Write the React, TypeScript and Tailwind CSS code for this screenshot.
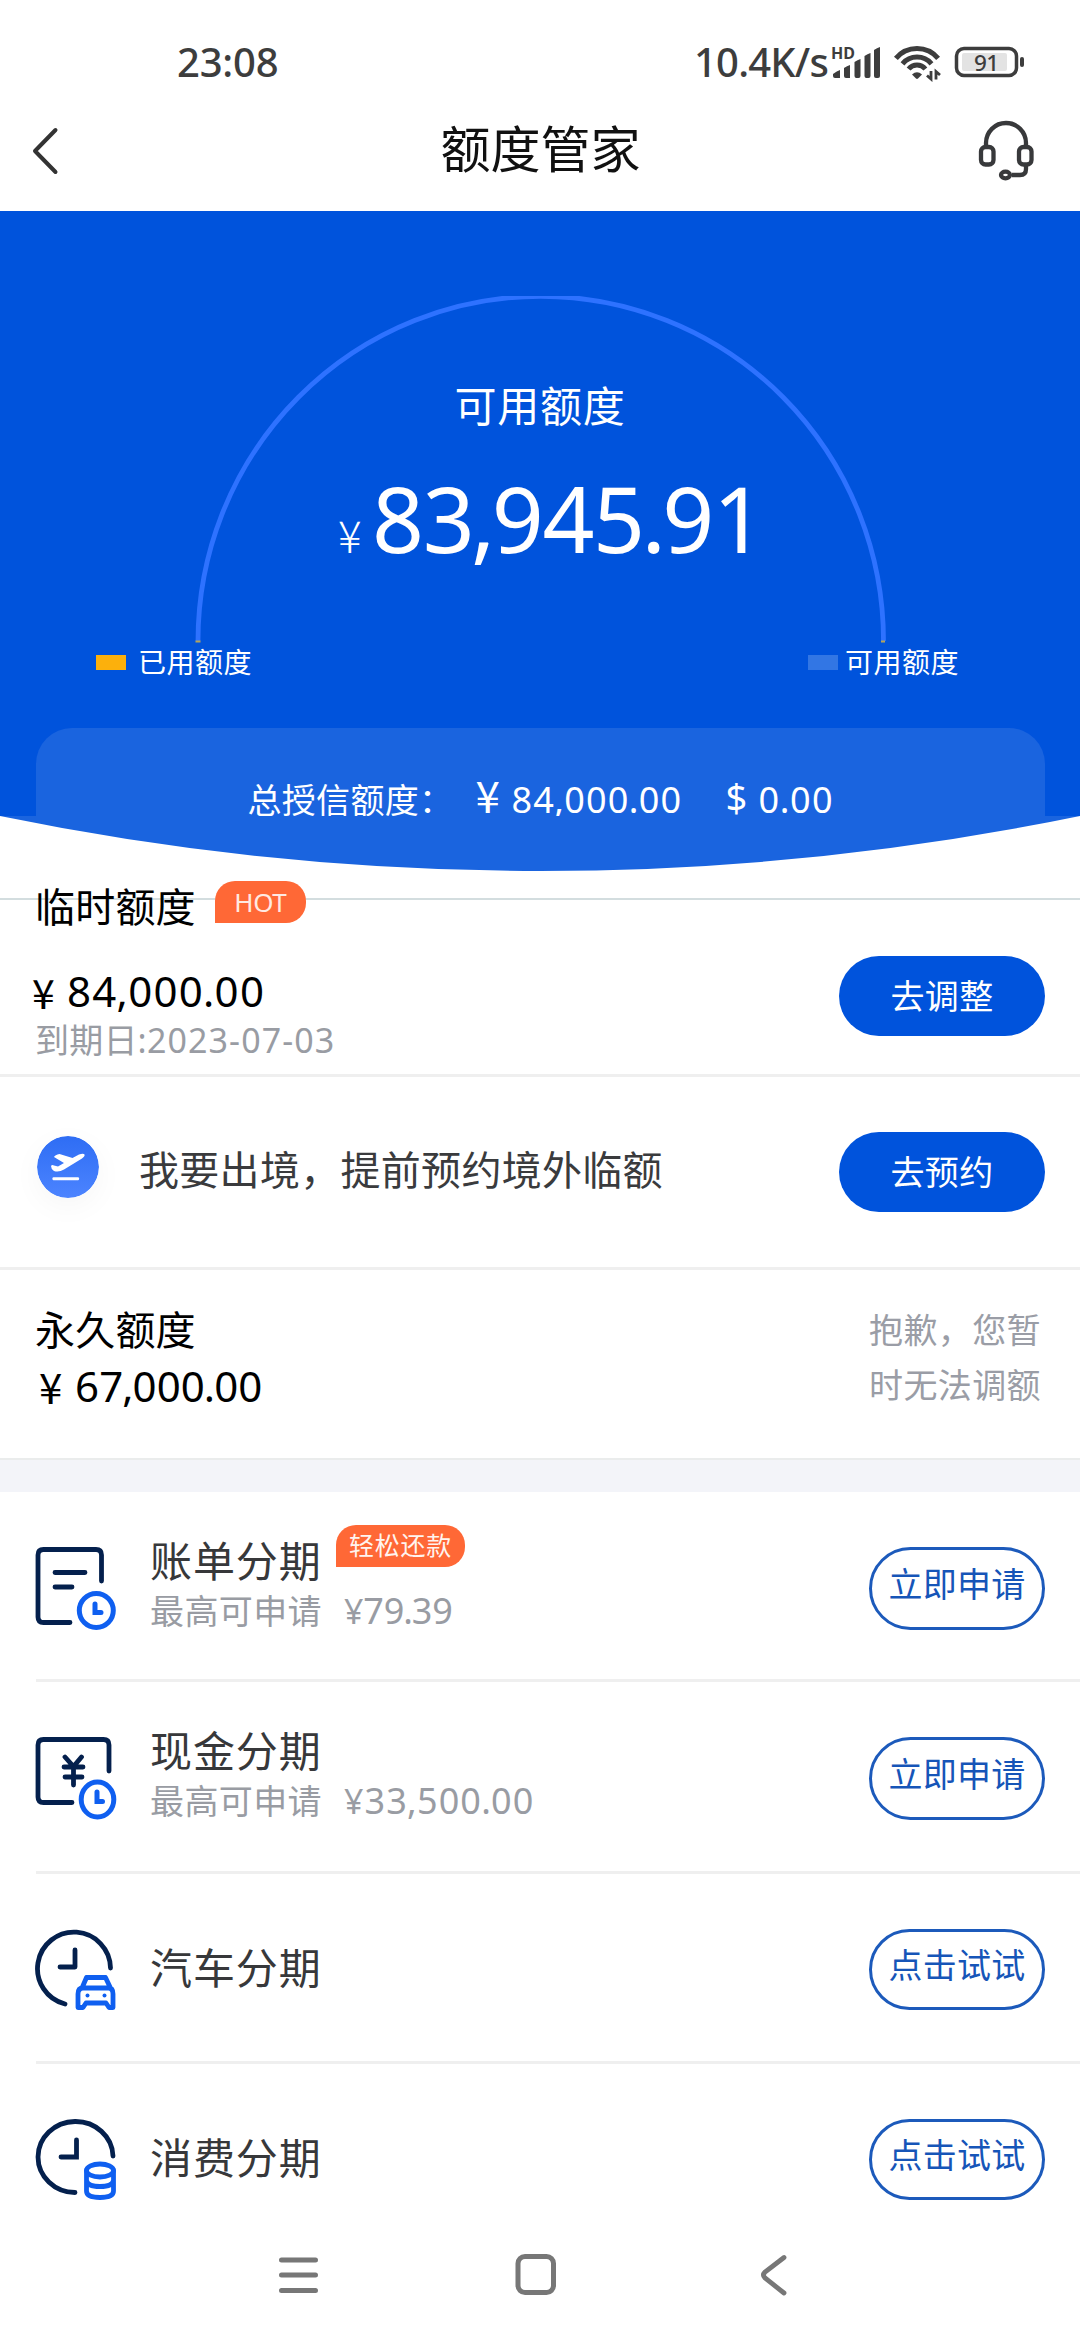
import React from "react";

/** Amount text whose separators sit closer to the neighbouring digits. */
function Num({ value }: { value: string }) {
  return (
    <>
      {value.split("").map((c, i) =>
        c === "," || c === "." ? (
          <span key={i} className="-mx-[0.025em]">{c}</span>
        ) : (
          <span key={i}>{c}</span>
        )
      )}
    </>
  );
}

function StatusBar() {
  return (
    <div className="flex h-[90px] items-center pl-[177px] text-[#3d3d3d]">
      <span className="mt-[34px] w-[102px] text-[40px] leading-[40px] font-medium whitespace-nowrap tracking-[-0.2px]">23:08</span>
      <span className="mt-[34px] ml-[415px] w-[136px] text-[40px] leading-[40px] font-medium whitespace-nowrap tracking-[-0.8px]">10.4K/s</span>
      <svg className="mt-[34px] h-[40px] w-[200px] shrink-0" viewBox="830 42 200 40" fill="none">
        <text x="831" y="58.500" fontSize="16" fontWeight="700" fill="#3d3d3d" fontFamily="Noto Sans" textLength="24" lengthAdjust="spacingAndGlyphs">HD</text>
        <g fill="#3d3d3d">
          <path d="M833 76v-2q4-3 7-4v8h-5q-2 0-2-2zM844 76v-8q3-2 6-3v13h-4q-2 0-2-2zM854.500 76V62q3-2 6-3v17q0 2-2 2h-2q-2 0-2-2zM864.500 76V56q3-2 6-3v23q0 2-2 2h-2q-2 0-2-2zM874 76V50q3-2 6-3v29q0 2-2 2h-2q-2 0-2-2z" />
          <path d="M912 74.500q5-4.500 10 0l-4 4q-1 .8-2 0z" />
        </g>
        <g stroke="#3d3d3d" strokeWidth="5">
          <path d="M895.900 58.300A27.500 27.500 0 0 1 938.100 58.300M902.500 63.800A19 19 0 0 1 931.500 63.800M908.600 69A11 11 0 0 1 925.400 69" />
        </g>
        <path d="M931 71v8l-4-3.500M936 79.500v-8l4 3.500" stroke="#3d3d3d" strokeWidth="2.800" />
        <rect x="956.5" y="48.500" width="60" height="27" rx="7.500" stroke="#3d3d3d" strokeWidth="3.500" />
        <rect x="962" y="53" width="45" height="18" rx="2" fill="#e3e3e3" />
        <rect x="1020" y="57" width="4" height="10" rx="2" fill="#3d3d3d" />
        <text x="974" y="70.800" fontSize="22.500" fontWeight="500" fill="#3d3d3d" fontFamily="Noto Sans" textLength="25">91</text>
      </svg>
    </div>
  );
}

function Header() {
  return (
    <header className="flex h-[121px] items-center justify-between pr-[45px] pl-[32px]">
      <svg className="h-[48px] w-[70px]" viewBox="0 0 70 48" fill="none" stroke="#333" strokeWidth="4" strokeLinecap="round" strokeLinejoin="round">
        <path d="M23.500 3L3 24l20.500 21" />
      </svg>
      <h1 className="-mt-[4px] ml-[2px] text-[50px] leading-[50px] font-normal text-[#111]">额度管家</h1>
      <svg className="h-[62px] w-[58px]" viewBox="977 120 58 62" fill="none" stroke="#38393b" strokeWidth="4.300">
        <path d="M986 146v-3a20 20 0 0 1 40 0v3M1026 165v4q0 6-6 6h-8" />
        <rect x="981" y="147" width="12.500" height="17.500" rx="4.500" />
        <rect x="1019" y="147" width="12.500" height="17.500" rx="4.500" />
        <ellipse cx="1005.500" cy="175" rx="4.500" ry="3.300" />
      </svg>
    </header>
  );
}

function Hero() {
  return (
    <section className="text-white">
      <div className="flex h-[605px] flex-col bg-[#0053dc]">
        <div className="relative mx-auto mt-[85px] flex h-[347px] w-[692px] flex-col items-center">
          <svg className="absolute inset-0 h-[347px] w-[692px]" viewBox="0 0 692 347" fill="none">
            <path d="M4 345A342.500 344.500 0 0 1 689.500 345" stroke="#2e72ff" strokeWidth="4.800" />
            <path d="M1.500 345.500h5M687 345.500h4" stroke="#b3a55a" strokeWidth="2" />
          </svg>
          <div className="mt-[89px] text-[42px] leading-[42px] tracking-[0.8px]">可用额度</div>
          <div className="mt-[46px] flex w-full items-baseline pl-[144px] leading-[90px]">
            <span className="w-[34px] font-['Noto_Sans_CJK_SC'] text-[44px] font-light">¥</span>
            <span className="text-[91px] tracking-[-1.4px]"><Num value="83,945.91" /></span>
          </div>
        </div>
        <div className="mt-[4px] flex h-[30px] items-center justify-between pr-[121px] pl-[96px] text-[28px] leading-[30px] tracking-[0.5px]">
          <span className="flex items-center gap-[12px]">
            <i className="h-[15px] w-[30px] bg-[#fcb00c]" />已用额度
          </span>
          <span className="flex items-center gap-[7px]">
            <i className="h-[15px] w-[30px] bg-[#3276e4]" />可用额度
          </span>
        </div>
        <div className="mx-[35.500px] mt-auto flex h-[88px] items-start rounded-t-[36px] bg-[#1a64df] pt-[54px] pl-[212px] leading-[36px] whitespace-nowrap">
          <span className="w-[228px] text-[34px] tracking-[0.3px]">总授信额度：</span>
          <span className="mt-[-6px] w-[36px] font-['Noto_Sans_CJK_SC'] text-[44px] leading-[36px]">¥</span>
          <span className="w-[214px] text-[36px] tracking-[1.2px]"><Num value="84,000.00" /></span>
          <span className="mt-[-3px] w-[33px] text-[38px]">$</span>
          <span className="text-[36px] tracking-[1.5px]"><Num value="0.00" /></span>
        </div>
      </div>
      <svg className="block h-[56px] w-full" viewBox="0 0 1080 56">
        <path d="M0 0A2678 2678 0 0 0 1080 0z" fill="#1a64df" />
      </svg>
    </section>
  );
}

function SolidButton({ children }: { children: React.ReactNode }) {
  return (
    <button className="h-[80px] w-[206px] shrink-0 rounded-full bg-[#0053dc] text-[34px] leading-[79px] tracking-[0.3px] text-white">
      {children}
    </button>
  );
}

function Temporary() {
  return (
    <section className="relative flex h-[205px] items-start justify-between border-b-[3px] border-[#efefef] pr-[35px] pl-[36px]">
      <div className="absolute top-[26px] left-0 h-[2px] w-full bg-[#d3dddf]" />
      <div className="relative">
        <div className="flex pt-[10px]">
          <span className="-ml-px mt-[5px] text-[40px] leading-[40px] tracking-[0.2px] text-black">临时额度</span>
          <span className="-mt-px ml-[19px] h-[42px] w-[91px] rounded-[20px] rounded-bl-none bg-[#ff6836] text-center text-[26px] leading-[42px] tracking-[-0.4px] text-[#ffe9e2]">HOT</span>
        </div>
        <div className="mt-[41px] ml-[-4px] flex text-[42px] leading-[46px] text-black">
          <span className="w-[35px] font-['Noto_Sans_CJK_SC'] text-[41px]">¥</span>
          <span className="tracking-[1.3px]"><Num value="84,000.00" /></span>
        </div>
        <div className="mt-[6px] -ml-px text-[34px] leading-[40px] tracking-[0.2px] text-[#999ca3]">到期日:<span className="tracking-[1.1px]">2023-07-03</span></div>
      </div>
      <div className="mt-[84px]"><SolidButton>去调整</SolidButton></div>
    </section>
  );
}

function Abroad() {
  return (
    <section className="flex h-[193px] items-center border-b-[3px] border-[#efefef] pr-[35px] pl-[37px]">
      <svg className="mt-[-11px] h-[62px] w-[62px] rounded-full shadow-[0_8px_30px_rgba(0,0,0,0.04)]" viewBox="0 0 62 62">
        <defs>
          <linearGradient id="planeBg" x1="0" y1="0" x2="0" y2="1">
            <stop offset="0" stopColor="#2e6df4" />
            <stop offset="1" stopColor="#4c84ff" />
          </linearGradient>
        </defs>
        <circle cx="31" cy="31" r="31" fill="url(#planeBg)" />
        <path d="M14 30q1-1.500 3-.5l4 1 6-3.500L17 21q1-2 5.500-3L35.500 22 42 18.500q4.500-1.500 5.500 0 .8 1.500-2.500 4L27 33.500Q22 36.500 17 35q-3-2-3-5z" fill="#fff" />
        <rect x="15.500" y="41.200" width="26.500" height="3" rx="1" fill="#fff" />
      </svg>
      <span className="-mt-[5px] ml-[40px] grow text-[40px] leading-[44px] tracking-[0.3px] text-[#3a3b3d]">我要出境，提前预约境外临额</span>
      <SolidButton>去预约</SolidButton>
    </section>
  );
}

function Permanent() {
  return (
    <section className="flex h-[190px] items-start justify-between border-b-2 border-[#eaecec] pt-[32px] pr-[37px] pl-[35px]">
      <div className="text-[40px] leading-[56px] text-black">
        <div className="tracking-[0.2px]">永久额度</div>
        <div className="flex text-[42px]">
          <span className="w-[40px] pl-[4px] font-['Noto_Sans_CJK_SC'] text-[42px]">¥</span>
          <span className="tracking-[0.1px]"><Num value="67,000.00" /></span>
        </div>
      </div>
      <p className="mt-px w-[174px] text-[34px] leading-[55px] tracking-[0.4px] text-[#9a9da6]">抱歉，您暂时无法调额</p>
    </section>
  );
}

const navy = "#04204d";
const blue = "#0f5ff0";

function BillIcon() {
  return (
    <svg className="h-[90px] w-[84px]" viewBox="34 1545 84 90" fill="none" strokeWidth="4.800" strokeLinecap="round">
      <path d="M101.500 1581v-26q0-5.500-5.500-5.500H43.500q-5.500 0-5.500 5.500v62q0 5.500 5.500 5.500H70M55 1572.500h30M55 1587h17" stroke={navy} />
      <circle cx="96.300" cy="1610.500" r="17" stroke={blue} strokeWidth="5" />
      <path d="M95 1604v8.500h6" stroke={blue} strokeWidth="5" />
    </svg>
  );
}

function CashIcon() {
  return (
    <svg className="h-[90px] w-[84px]" viewBox="34 1735 84 90" fill="none" strokeWidth="4.800" strokeLinecap="round">
      <path d="M109 1771v-26q0-5.500-5.500-5.500h-60q-5.500 0-5.500 5.500v52q0 5.500 5.500 5.500H72M65 1757l8.500 9.500 8-9.500M64 1767h19M65 1777h17M73.500 1767v18" stroke={navy} />
      <ellipse cx="97.500" cy="1799.500" rx="16.300" ry="17.500" stroke={blue} strokeWidth="5" />
      <path d="M97 1792v9.500h5.500" stroke={blue} strokeWidth="5" />
    </svg>
  );
}

function CarIcon() {
  return (
    <svg className="mt-px h-[90px] w-[84px]" viewBox="34 1927 84 90" fill="none" strokeWidth="4.800" strokeLinecap="round" strokeLinejoin="round">
      <path d="M110.500 1967A36.500 36.500 0 1 0 65 2003M75 1949v17H60" stroke={navy} />
      <path d="M82 1987l4.500-10.500h19l5 10.500M79 2006.500h4l3-4.500h20l3 4.500h4v-13.500q0-6-4.500-6H83q-5 0-5 6v13.500z" stroke={blue} />
      <circle cx="87.500" cy="1994.500" r="2" fill={blue} />
      <circle cx="104.500" cy="1994.500" r="2" fill={blue} />
    </svg>
  );
}

function CoinsIcon() {
  return (
    <svg className="mt-px h-[90px] w-[84px]" viewBox="34 2117 84 90" fill="none" strokeWidth="4.800" strokeLinecap="round">
      <path d="M113 2155A37.500 35.500 0 1 0 75 2191.500M76.500 2139v17H61" stroke={navy} />
      <g stroke={blue}>
        <ellipse cx="100" cy="2169.500" rx="13.500" ry="6.500" />
        <path d="M86.500 2169.500v20.500q0 6.500 13.500 6.500t13.500-6.500v-20.500M86.500 2179.500q1 6 13.500 6t13.500-6" />
      </g>
    </svg>
  );
}

type RowProps = {
  icon: React.ReactNode;
  title: string;
  amount?: string;
  amountClass?: string;
  badge?: string;
  action: string;
  heightClass: string;
  last?: boolean;
};

function InstallmentRow({ icon, title, amount, amountClass, badge, action, heightClass, last }: RowProps) {
  return (
    <div className={`ml-[36px] flex items-start pt-[55px] pr-[35px] ${heightClass} ${last ? "" : "border-b-[3px] border-[#efefef]"}`}>
      <div className="-mt-[2px] -ml-[2px] w-[117px] shrink-0">{icon}</div>
      <div className={amount ? "relative -mt-[8px] grow" : "relative mt-[17px] grow"}>
        <div className="-ml-px text-[42px] leading-[44px] tracking-[0.9px] text-[#37383a]">{title}</div>
        {badge && (
          <span className="absolute top-[-14px] left-[185px] h-[42px] w-[129px] rounded-[20px] rounded-bl-none bg-[#ff6836] text-center text-[25px] leading-[40px] tracking-[0.8px] text-[#fff4ef]">{badge}</span>
        )}
        {amount && (
          <div className="mt-[8px] -ml-px flex text-[34px] leading-[40px] text-[#999ca3]">
            <span className="w-[194px] tracking-[0.4px]">最高可申请</span>
            <span className={`text-[36px] ${amountClass}`}><span className="text-[34px]">¥</span><Num value={amount} /></span>
          </div>
        )}
      </div>
      <button className={`w-[176px] shrink-0 rounded-full border-[3px] border-[#1c5abb] pb-[8px] text-[34px] tracking-[0.3px] whitespace-nowrap text-[#1655b8] ${amount ? "h-[83px] leading-[67px]" : "h-[81px] leading-[61px]"}`}>
        {action}
      </button>
    </div>
  );
}

function SystemNav() {
  return (
    <nav className="flex h-[130px] items-center bg-white">
      <svg className="ml-[276px] h-[44px] w-[44px]" viewBox="276 2253 44 44" stroke="#777" strokeWidth="5" strokeLinecap="round">
        <path d="M281.500 2260h34M281.500 2275h34M281.500 2290.500h34" />
      </svg>
      <svg className="ml-[194px] h-[44px] w-[44px]" viewBox="514 2253 44 44" fill="none" stroke="#777" strokeWidth="5">
        <rect x="518" y="2256.500" width="35.500" height="36" rx="7" />
      </svg>
      <svg className="ml-[200px] h-[44px] w-[32px]" viewBox="758 2253 32 44" fill="none" stroke="#777" strokeWidth="4.800" strokeLinecap="round">
        <path d="M784 2257.500L765 2272q-3 3 0 6l19 15" />
      </svg>
    </nav>
  );
}

export default function App() {
  return (
    <main className="flex h-[2340px] w-[1080px] flex-col overflow-hidden bg-white font-['Noto_Sans','Noto_Sans_CJK_SC',sans-serif]">
      <StatusBar />
      <Header />
      <Hero />
      <Temporary />
      <Abroad />
      <Permanent />
      <div className="h-[32px] bg-[#f3f4f9]" />
      <InstallmentRow icon={<BillIcon />} title="账单分期" amount="79.39" amountClass="tracking-[-0.2px]" badge="轻松还款" action="立即申请" heightClass="h-[190px]" />
      <InstallmentRow icon={<CashIcon />} title="现金分期" amount="33,500.00" amountClass="tracking-[1.1px]" action="立即申请" heightClass="h-[192px]" />
      <InstallmentRow icon={<CarIcon />} title="汽车分期" action="点击试试" heightClass="h-[190px]" />
      <InstallmentRow icon={<CoinsIcon />} title="消费分期" action="点击试试" heightClass="h-[146px]" last />
      <SystemNav />
    </main>
  );
}
